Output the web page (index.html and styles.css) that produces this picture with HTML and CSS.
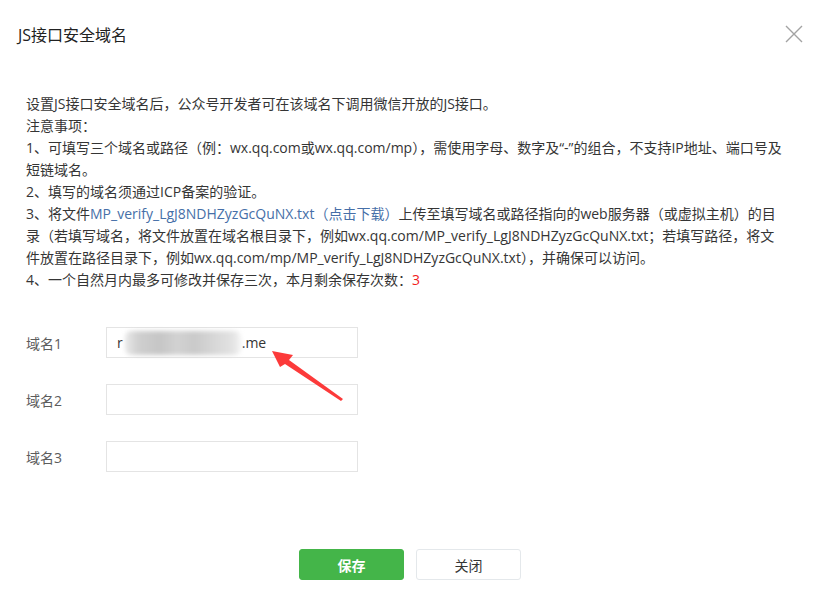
FILE: index.html
```html
<!DOCTYPE html>
<html lang="zh-CN">
<head>
<meta charset="utf-8">
<title>JS接口安全域名</title>
<link rel="stylesheet" href="styles.css">
</head>
<body>
<div class="dialog">
  <div class="hd">
    <h3 class="title">JS接口安全域名</h3>
    <span class="close" aria-label="关闭">
      <svg width="18" height="18" viewBox="0 0 18 18"><path d="M1 1L17 17M17 1L1 17" stroke="#a3a3a3" stroke-width="1.4" fill="none"/></svg>
    </span>
  </div>
  <div class="bd">
    <div class="tips">
      <p class="line">设置JS接口安全域名后，公众号开发者可在该域名下调用微信开放的JS接口。</p>
      <p class="line">注意事项：</p>
      <p class="line">1、可填写三个域名或路径（例：wx.qq.com或wx.qq.com/mp），需使用字母、数字及“-”的组合，不支持IP地址、端口号及</p>
      <p class="line">短链域名。</p>
      <p class="line">2、填写的域名须通过ICP备案的验证。</p>
      <p class="line">3、将文件<a class="link" href="#">MP_verify_LgJ8NDHZyzGcQuNX.txt（点击下载）</a>上传至填写域名或路径指向的web服务器（或虚拟主机）的目</p>
      <p class="line">录（若填写域名，将文件放置在域名根目录下，例如wx.qq.com/MP_verify_LgJ8NDHZyzGcQuNX.txt；若填写路径，将文</p>
      <p class="line">件放置在路径目录下，例如wx.qq.com/mp/MP_verify_LgJ8NDHZyzGcQuNX.txt），并确保可以访问。</p>
      <p class="line">4、一个自然月内最多可修改并保存三次，本月剩余保存次数：<span class="num">3</span></p>
    </div>
    <div class="form">
      <div class="row">
        <label class="label">域名1</label>
        <div class="input"><span>r</span><span class="mosaic"></span><span>.me</span></div>
      </div>
      <div class="row">
        <label class="label">域名2</label>
        <div class="input"></div>
      </div>
      <div class="row">
        <label class="label">域名3</label>
        <div class="input"></div>
      </div>
    </div>
  </div>
  <div class="ft">
    <a class="btn btn-primary" href="#">保存</a>
    <a class="btn btn-default" href="#">关闭</a>
  </div>
  <svg class="arrow" width="80" height="56" viewBox="0 0 80 56">
    <polygon points="0,0 21,4 17,9 71,48 69,50 13,13 8,16" fill="#fc3a3a"/>
  </svg>
</div>
</body>
</html>
```
FILE: styles.css
```css
* { box-sizing: border-box; }
html, body { margin: 0; padding: 0; background: #fff; }
body {
  font-family: "Open Sans", "Noto Sans CJK SC", sans-serif;
  color: #353535;
  font-size: 14px;
}
.dialog {
  position: relative;
  width: 832px;
  height: 603px;
  background: #fff;
}
.hd {
  height: 68px;
  display: flex;
  align-items: center;
  justify-content: space-between;
  padding: 0 29px 0 18px;
}
.title {
  margin: 0;
  font-size: 16px;
  font-weight: normal;
  color: #222;
}
.close { display: flex; width: 18px; height: 18px; }
.bd { padding: 25px 26px 0; }
.tips { color: #353535; }
.line {
  margin: 0;
  line-height: 22px;
  white-space: nowrap;
}
.link { color: #466fa8; text-decoration: none; }
.num { color: #f21d1d; }
.form {
  margin-top: 36px;
  display: flex;
  flex-direction: column;
  gap: 26px;
}
.row { display: flex; align-items: center; }
.label { width: 80px; color: #5c5c5c; }
.input {
  width: 252px;
  height: 31px;
  border: 1px solid #e4e4e4;
  padding: 0 10px;
  display: flex;
  align-items: center;
  color: #353535;
}
.mosaic {
  display: inline-block;
  width: 116px;
  height: 24px;
  margin: 0 1px 0 2px;
  background: linear-gradient(90deg, #e9e9e9 0, #cfcfcf 12%, #c6c6c6 30%, #d2d2d2 45%, #cacaca 60%, #d8d8d8 78%, #e2e2e2 92%, #f4f4f4 100%);
  filter: blur(2px);
  border-radius: 6px;
}
.ft {
  position: absolute;
  left: 0;
  right: 0;
  top: 549px;
  display: flex;
  justify-content: center;
  gap: 12px;
  padding-right: 12px;
}
.btn {
  width: 105px;
  height: 31px;
  display: flex;
  align-items: center;
  justify-content: center;
  border-radius: 3px;
  text-decoration: none;
  font-size: 14px;
}
.btn-primary { background: #44b549; color: #fff; border: 1px solid #44b549; font-weight: bold; }
.btn-default { background: #fff; color: #353535; border: 1px solid #e4e8eb; }
.arrow {
  position: absolute;
  left: 272px;
  top: 351px;
}
```
